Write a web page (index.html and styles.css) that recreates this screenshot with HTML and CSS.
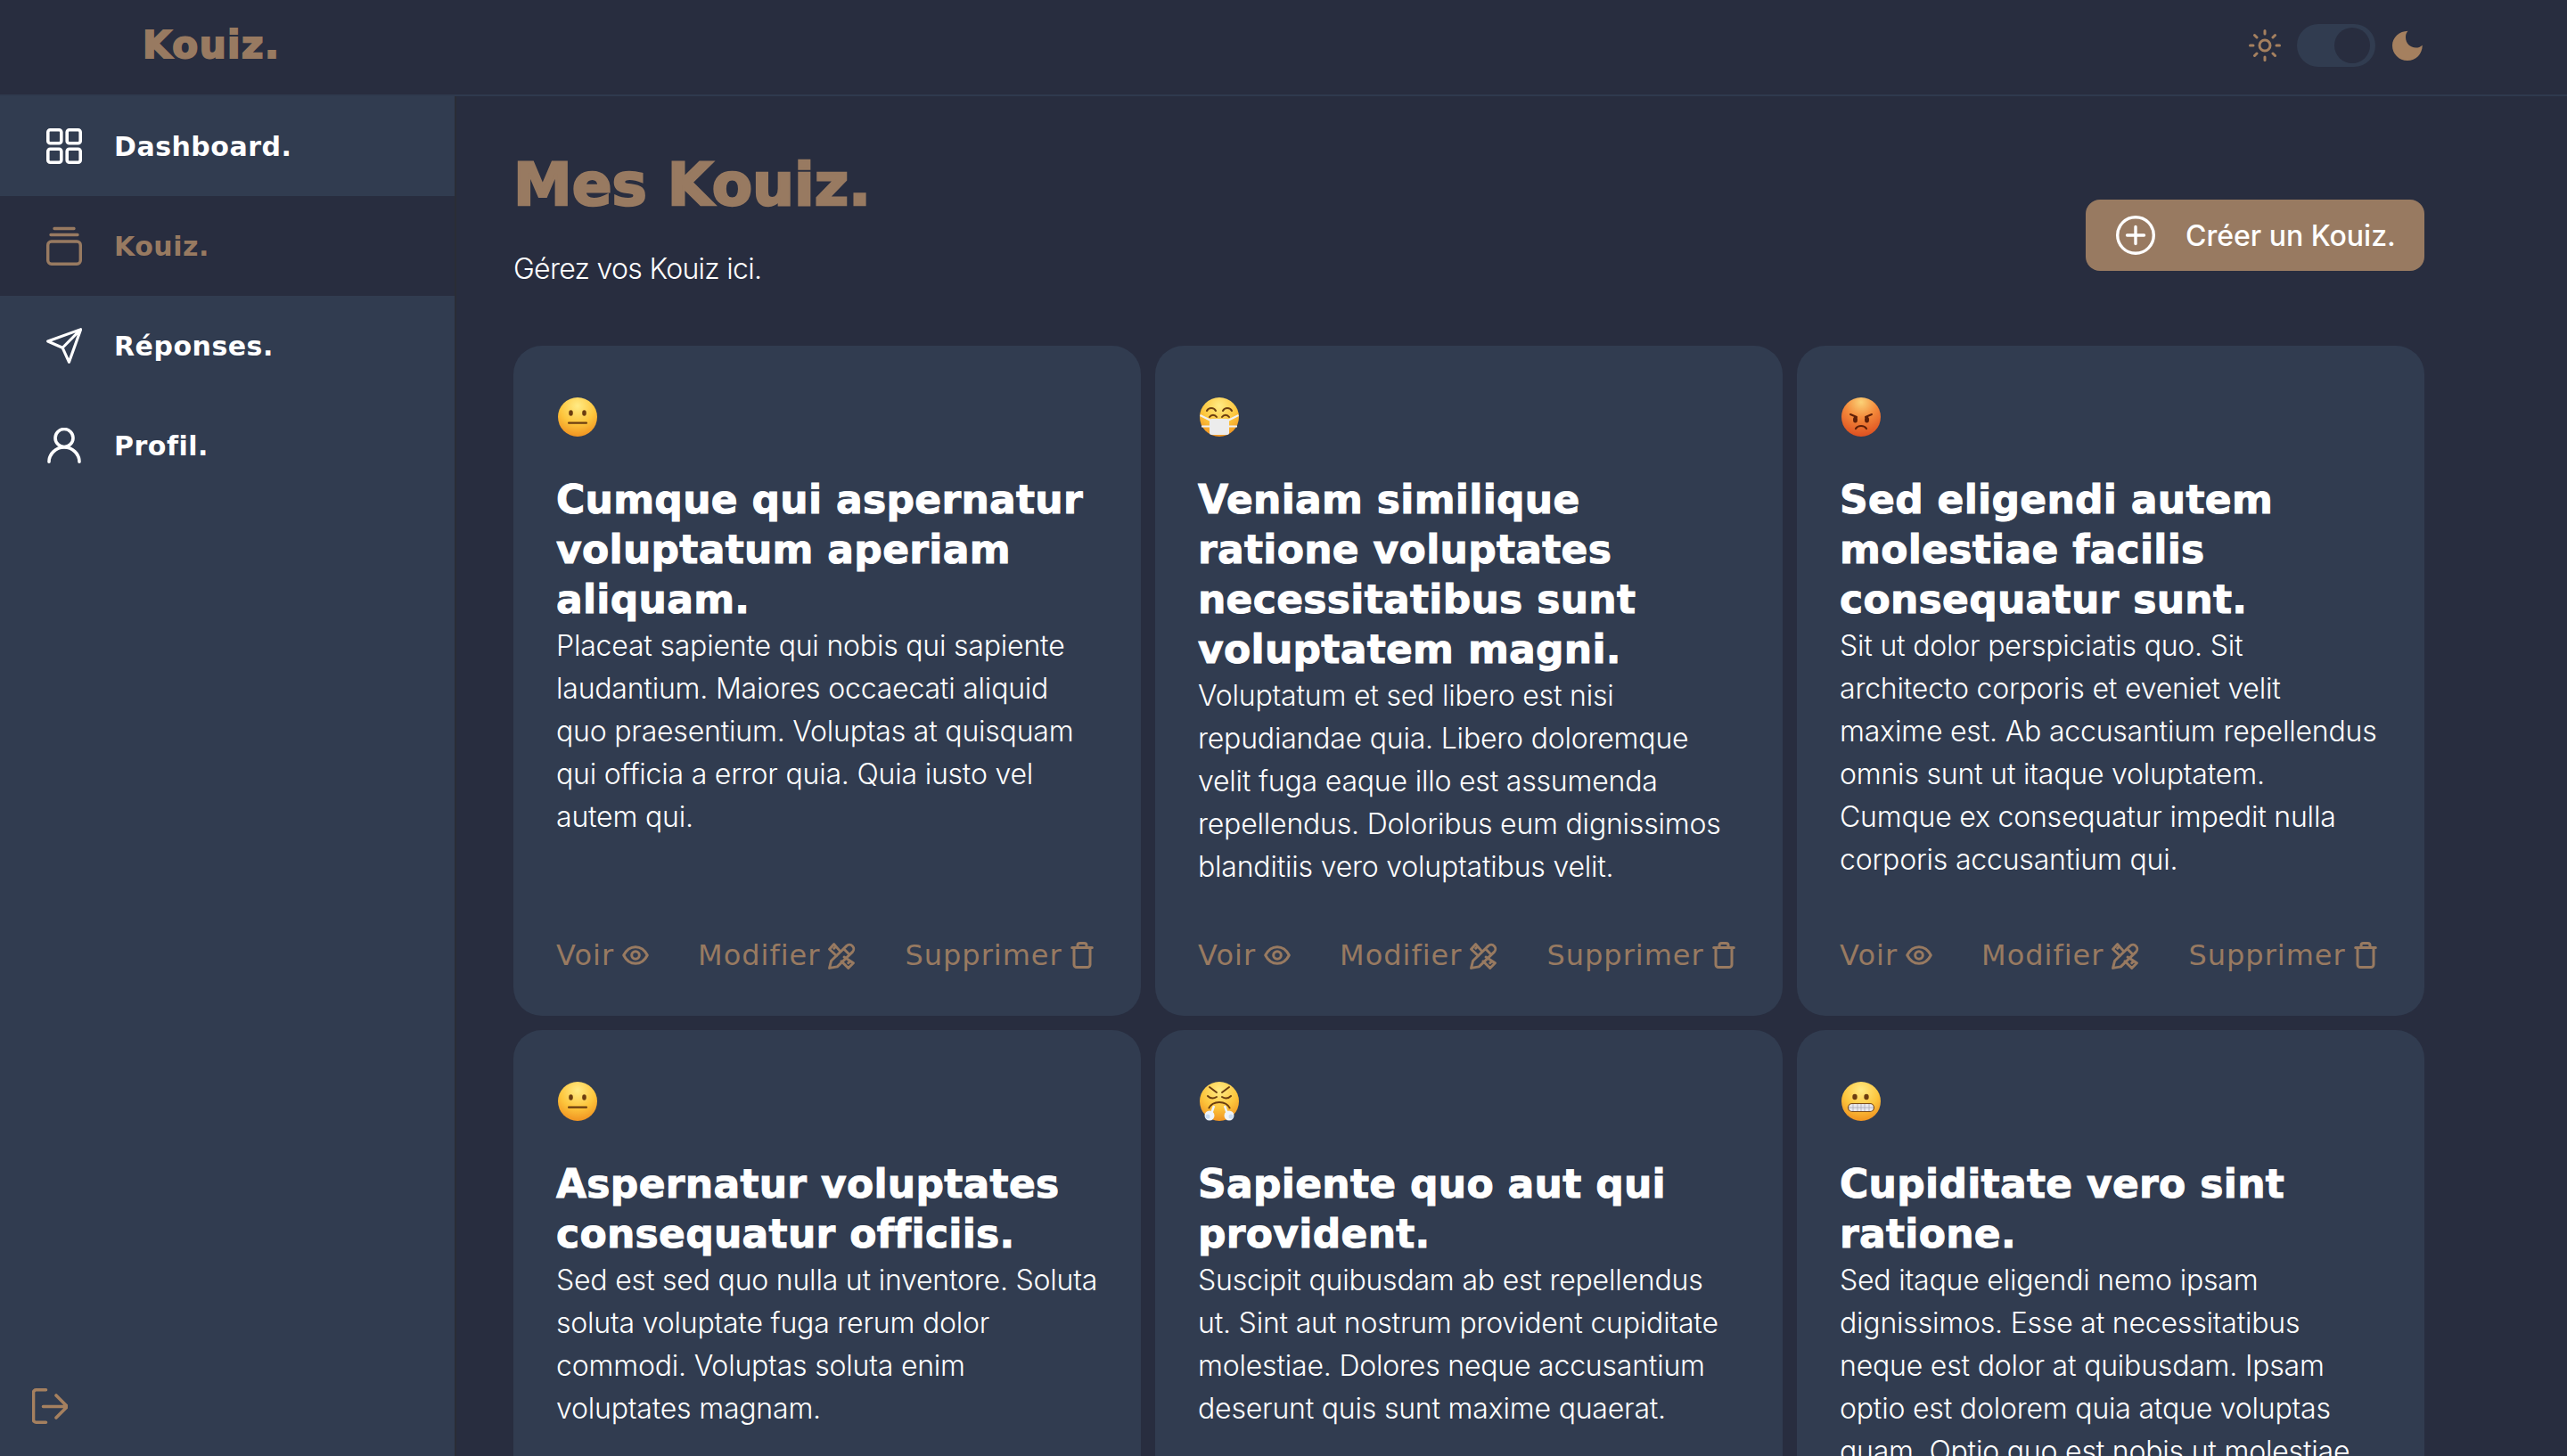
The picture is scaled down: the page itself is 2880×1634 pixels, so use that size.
FILE: index.html
```html
<!DOCTYPE html>
<html lang="fr">
<head>
<meta charset="utf-8">
<title>Kouiz.</title>
<link rel="stylesheet" href="styles.css">
</head>
<body>
<header class="topbar">
  <div class="logo">Kouiz.</div>
  <div class="theme">
    <svg class="sun" viewBox="0 0 36 36" fill="none" stroke="currentColor" stroke-width="3" stroke-linecap="round"><circle cx="18" cy="18" r="6"/><path d="M18 1.500v3.500M18 31v3.500M1.500 18H5M31 18h3.500M6.500 6.500L9 9M27 27l2.500 2.500M6.500 29.500L9 27M27 9l2.500-2.500"/></svg>
    <div class="track"><div class="knob"></div></div>
    <svg class="moon" viewBox="0 0 34 34"><path fill="currentColor" d="M17.500 0.800C15.500 3 15 5 15 8c0 6.500 5 11.500 11.500 11.500 2.800 0 4.800-.8 7.300-2.800C33.500 27 26.500 34 17 34 7.500 34 0 26.500 0 17 0 8 8 1 17.500 0.800z"/></svg>
  </div>
</header>
<div class="layout">
  <aside class="sidebar">
    <nav class="nav">
      <a class="nav-item">
        <svg class="nav-icon" viewBox="0 0 40 40" fill="none" stroke="currentColor" stroke-width="3.600"><rect x="1.800" y="1.800" width="15" height="15" rx="2.500"/><rect x="23.200" y="1.800" width="15" height="15" rx="2.500"/><rect x="1.800" y="23.200" width="15" height="15" rx="2.500"/><rect x="23.200" y="23.200" width="15" height="15" rx="2.500"/></svg>
        <span>Dashboard.</span>
      </a>
      <a class="nav-item active">
        <svg class="nav-icon tall" viewBox="0 0 40 44" fill="none" stroke="currentColor" stroke-width="3.400" stroke-linecap="round"><rect x="1.700" y="17" width="36.600" height="25.300" rx="4"/><path d="M5 9.500h30M9 2.500h22"/></svg>
        <span>Kouiz.</span>
      </a>
      <a class="nav-item">
        <svg class="nav-icon tall" viewBox="0 0 44 44" fill="none" stroke="currentColor" stroke-width="3.400" stroke-linejoin="round" stroke-linecap="round"><path d="M42.500 1.800L1.800 16.500 20 24.500l8 17.700zM20 24.500L42.500 1.800"/></svg>
        <span>Réponses.</span>
      </a>
      <a class="nav-item">
        <svg class="nav-icon" viewBox="0 0 40 40" fill="none" stroke="currentColor" stroke-width="3.600" stroke-linecap="round"><circle cx="20" cy="11.500" r="10"/><path d="M3 38.200C3 29.500 10.500 22 20 22s17 7.500 17 16.200"/></svg>
        <span>Profil.</span>
      </a>
    </nav>
    <svg class="logout" viewBox="0 0 40 40" fill="none" stroke="currentColor" stroke-width="3.600" stroke-linecap="round" stroke-linejoin="round"><path d="M15.500 1.800H4.500a3 3 0 0 0-3 3v30.400a3 3 0 0 0 3 3h11M12.500 20.500h27M27 8l12.500 12.500L27 33"/></svg>
  </aside>
  <main class="main">
    <div class="page-head">
      <div>
        <h1 class="page-title">Mes Kouiz.</h1>
        <p class="page-sub">Gérez vos Kouiz ici.</p>
      </div>
      <button class="create">
        <svg class="create-icon" viewBox="0 0 44 44" fill="none" stroke="currentColor" stroke-width="3.400" stroke-linecap="round"><circle cx="22" cy="22" r="20.300"/><path d="M22 12.500v19M12.500 22h19"/></svg>
        <span>Créer un Kouiz.</span>
      </button>
    </div>
    <section class="grid">

      <article class="card">
        <svg class="emoji" viewBox="0 0 44 44">
          <defs>
            <radialGradient id="yel" cx="50%" cy="22%" r="82%"><stop offset="0" stop-color="#ffeb85"/><stop offset=".55" stop-color="#fdc53c"/><stop offset="1" stop-color="#ee8d1e"/></radialGradient>
            <radialGradient id="red" cx="50%" cy="12%" r="90%"><stop offset="0" stop-color="#fbd277"/><stop offset=".45" stop-color="#f48a3b"/><stop offset="1" stop-color="#dc4d1f"/></radialGradient>
          </defs>
          <circle cx="22" cy="22" r="22" fill="url(#yel)"/><ellipse cx="14.500" cy="17.500" rx="2.300" ry="3.300" fill="#6b3d10"/><ellipse cx="29.500" cy="17.500" rx="2.300" ry="3.300" fill="#6b3d10"/><rect x="11" y="27.500" width="22" height="2.200" rx="1" fill="#6b3d10"/>
        </svg>
        <h2 class="card-title">Cumque qui aspernatur<br>voluptatum aperiam<br>aliquam.</h2>
        <p class="card-text">Placeat sapiente qui nobis qui sapiente<br>laudantium. Maiores occaecati aliquid<br>quo praesentium. Voluptas at quisquam<br>qui officia a error quia. Quia iusto vel<br>autem qui.</p>
        <div class="actions">
          <a class="action">Voir <svg class="ai-eye" viewBox="0 0 30 22" fill="none" stroke="currentColor" stroke-width="3" stroke-linejoin="round"><path d="M1.700 11C5 4.500 10 1.700 15 1.700S25 4.500 28.300 11C25 17.500 20 20.300 15 20.300S5 17.500 1.700 11z"/><circle cx="15" cy="11" r="4.300"/></svg></a>
          <a class="action">Modifier <svg class="ai-edit" viewBox="0 0 30 30" fill="none" stroke="currentColor" stroke-width="2.800" stroke-linejoin="round" stroke-linecap="round"><path d="M1.500 28.500l2-8L20 4.500a4.500 4.500 0 0 1 6.500 6.500L10 27zM17 7.500l6 6"/><path d="M13 10L6.500 2.500 1.500 8l7.500 7M17.500 16.500L27.500 23l-5.500 5.500-7.500-7.500M6.500 7l2-2M22 23l2-2"/></svg></a>
          <a class="action">Supprimer <svg class="ai-trash" viewBox="0 0 26 30" fill="none" stroke="currentColor" stroke-width="3" stroke-linecap="round" stroke-linejoin="round"><path d="M1.700 6.500h22.600M4 6.500v19a3 3 0 0 0 3 3h12a3 3 0 0 0 3-3v-19M8 6.500V4a2.500 2.500 0 0 1 2.500-2.500h5A2.500 2.500 0 0 1 18 4v2.500"/></svg></a>
        </div>
      </article>

      <article class="card">
        <svg class="emoji" viewBox="0 0 44 44">
          <circle cx="22" cy="22" r="22" fill="url(#yel)"/><path d="M8 15c2-4 8-4 10 0M26 15c2-4 8-4 10 0" fill="none" stroke="#6b3d10" stroke-width="2" stroke-linecap="round"/><path d="M11 22c2-3 6-3 8 0M25 22c2-3 6-3 8 0" fill="none" stroke="#6b3d10" stroke-width="2" stroke-linecap="round"/><path d="M0.500 20l12 6M43.500 20l-12 6M2 32.500h10M42 32.500H32" stroke="#f1f1f1" stroke-width="2"/><rect x="11" y="24" width="22" height="18" rx="2.500" fill="#ececec"/>
        </svg>
        <h2 class="card-title">Veniam similique<br>ratione voluptates<br>necessitatibus sunt<br>voluptatem magni.</h2>
        <p class="card-text">Voluptatum et sed libero est nisi<br>repudiandae quia. Libero doloremque<br>velit fuga eaque illo est assumenda<br>repellendus. Doloribus eum dignissimos<br>blanditiis vero voluptatibus velit.</p>
        <div class="actions">
          <a class="action">Voir <svg class="ai-eye" viewBox="0 0 30 22" fill="none" stroke="currentColor" stroke-width="3" stroke-linejoin="round"><path d="M1.700 11C5 4.500 10 1.700 15 1.700S25 4.500 28.300 11C25 17.500 20 20.300 15 20.300S5 17.500 1.700 11z"/><circle cx="15" cy="11" r="4.300"/></svg></a>
          <a class="action">Modifier <svg class="ai-edit" viewBox="0 0 30 30" fill="none" stroke="currentColor" stroke-width="2.800" stroke-linejoin="round" stroke-linecap="round"><path d="M1.500 28.500l2-8L20 4.500a4.500 4.500 0 0 1 6.500 6.500L10 27zM17 7.500l6 6"/><path d="M13 10L6.500 2.500 1.500 8l7.500 7M17.500 16.500L27.500 23l-5.500 5.500-7.500-7.500M6.500 7l2-2M22 23l2-2"/></svg></a>
          <a class="action">Supprimer <svg class="ai-trash" viewBox="0 0 26 30" fill="none" stroke="currentColor" stroke-width="3" stroke-linecap="round" stroke-linejoin="round"><path d="M1.700 6.500h22.600M4 6.500v19a3 3 0 0 0 3 3h12a3 3 0 0 0 3-3v-19M8 6.500V4a2.500 2.500 0 0 1 2.500-2.500h5A2.500 2.500 0 0 1 18 4v2.500"/></svg></a>
        </div>
      </article>

      <article class="card">
        <svg class="emoji" viewBox="0 0 44 44">
          <circle cx="22" cy="22" r="22" fill="url(#red)"/><path d="M10 19l7 3M34 19l-7 3" stroke="#5d1f08" stroke-width="2" stroke-linecap="round"/><ellipse cx="15.500" cy="25" rx="2.500" ry="3.500" fill="#5d1f08"/><ellipse cx="28.500" cy="25" rx="2.500" ry="3.500" fill="#5d1f08"/><path d="M16 35c2.500-4 9.500-4 12 0" fill="none" stroke="#5d1f08" stroke-width="2.200" stroke-linecap="round"/>
        </svg>
        <h2 class="card-title">Sed eligendi autem<br>molestiae facilis<br>consequatur sunt.</h2>
        <p class="card-text">Sit ut dolor perspiciatis quo. Sit<br>architecto corporis et eveniet velit<br>maxime est. Ab accusantium repellendus<br>omnis sunt ut itaque voluptatem.<br>Cumque ex consequatur impedit nulla<br>corporis accusantium qui.</p>
        <div class="actions">
          <a class="action">Voir <svg class="ai-eye" viewBox="0 0 30 22" fill="none" stroke="currentColor" stroke-width="3" stroke-linejoin="round"><path d="M1.700 11C5 4.500 10 1.700 15 1.700S25 4.500 28.300 11C25 17.500 20 20.300 15 20.300S5 17.500 1.700 11z"/><circle cx="15" cy="11" r="4.300"/></svg></a>
          <a class="action">Modifier <svg class="ai-edit" viewBox="0 0 30 30" fill="none" stroke="currentColor" stroke-width="2.800" stroke-linejoin="round" stroke-linecap="round"><path d="M1.500 28.500l2-8L20 4.500a4.500 4.500 0 0 1 6.500 6.500L10 27zM17 7.500l6 6"/><path d="M13 10L6.500 2.500 1.500 8l7.500 7M17.500 16.500L27.500 23l-5.500 5.500-7.500-7.500M6.500 7l2-2M22 23l2-2"/></svg></a>
          <a class="action">Supprimer <svg class="ai-trash" viewBox="0 0 26 30" fill="none" stroke="currentColor" stroke-width="3" stroke-linecap="round" stroke-linejoin="round"><path d="M1.700 6.500h22.600M4 6.500v19a3 3 0 0 0 3 3h12a3 3 0 0 0 3-3v-19M8 6.500V4a2.500 2.500 0 0 1 2.500-2.500h5A2.500 2.500 0 0 1 18 4v2.500"/></svg></a>
        </div>
      </article>

      <article class="card">
        <svg class="emoji" viewBox="0 0 44 44">
          <circle cx="22" cy="22" r="22" fill="url(#yel)"/><ellipse cx="14.500" cy="17.500" rx="2.300" ry="3.300" fill="#6b3d10"/><ellipse cx="29.500" cy="17.500" rx="2.300" ry="3.300" fill="#6b3d10"/><rect x="11" y="27.500" width="22" height="2.200" rx="1" fill="#6b3d10"/>
        </svg>
        <h2 class="card-title">Aspernatur voluptates<br>consequatur officiis.</h2>
        <p class="card-text">Sed est sed quo nulla ut inventore. Soluta<br>soluta voluptate fuga rerum dolor<br>commodi. Voluptas soluta enim<br>voluptates magnam.</p>
      </article>

      <article class="card">
        <svg class="emoji" viewBox="0 0 44 44">
          <circle cx="22" cy="22" r="22" fill="url(#yel)"/><path d="M11 6l8 6M33 6l-8 6" stroke="#6b3d10" stroke-width="2" stroke-linecap="round"/><path d="M9 16c3 3 7 3 10 1M35 16c-3 3-7 3-10 1" fill="none" stroke="#6b3d10" stroke-width="2" stroke-linecap="round"/><path d="M10 30c3-6 7-7 12-7s9 1 12 7" fill="none" stroke="#6b3d10" stroke-width="2"/><path d="M16 27l-3 9M28 27l3 9" stroke="#eef4fb" stroke-width="2.500"/><circle cx="11" cy="38" r="5.500" fill="#eef4fb"/><circle cx="33" cy="38" r="5.500" fill="#eef4fb"/><circle cx="9" cy="39" r="2.500" fill="#c9dcf2"/><circle cx="35" cy="39" r="2.500" fill="#c9dcf2"/>
        </svg>
        <h2 class="card-title">Sapiente quo aut qui<br>provident.</h2>
        <p class="card-text">Suscipit quibusdam ab est repellendus<br>ut. Sint aut nostrum provident cupiditate<br>molestiae. Dolores neque accusantium<br>deserunt quis sunt maxime quaerat.</p>
      </article>

      <article class="card">
        <svg class="emoji" viewBox="0 0 44 44">
          <circle cx="22" cy="22" r="22" fill="url(#yel)"/><ellipse cx="15" cy="17" rx="2.700" ry="3.200" fill="#6b3d10"/><ellipse cx="28" cy="17" rx="2.700" ry="3.200" fill="#6b3d10"/><rect x="7.500" y="24.500" width="29" height="9" rx="4.500" fill="#e8e8ee" stroke="#7a4a18" stroke-width="1.200"/><path d="M8 29h28M13 25v8M18 25v8M22 25v8M26 25v8M31 25v8" stroke="#a9a9b5" stroke-width=".8"/>
        </svg>
        <h2 class="card-title">Cupiditate vero sint<br>ratione.</h2>
        <p class="card-text">Sed itaque eligendi nemo ipsam<br>dignissimos. Esse at necessitatibus<br>neque est dolor at quibusdam. Ipsam<br>optio est dolorem quia atque voluptas<br>quam. Optio quo est nobis ut molestiae</p>
      </article>

    </section>
  </main>
</div>
</body>
</html>
```
FILE: styles.css
```css
* { box-sizing: border-box; }
html, body { margin: 0; height: 100%; overflow: hidden; }
body {
  background: #282d3f;
  color: #fff;
  font-family: "Inter", "Liberation Sans", sans-serif;
  display: flex;
  flex-direction: column;
}
.topbar {
  flex: 0 0 108px;
  border-bottom: 2px solid #2f3a4e;
  background: #282d3f;
  display: flex;
  justify-content: space-between;
  align-items: center;
  padding: 0 162px 0 160px;
}
.logo, .page-title {
  font-family: "DejaVu Sans", sans-serif;
  font-weight: 700;
  color: #987a61;
}
.logo { font-size: 42px; letter-spacing: 1.500px; line-height: 1; margin-top: -4px; -webkit-text-stroke: 2px #987a61; }
.theme { display: flex; align-items: center; color: #a5805f; margin-bottom: 4px; }
.sun { width: 36px; height: 36px; margin-right: 18px; }
.track {
  width: 88px; height: 48px; border-radius: 24px;
  background: #313c50;
  display: flex; align-items: center; justify-content: flex-end;
  padding-right: 6px;
}
.knob { width: 40px; height: 40px; border-radius: 50%; background: #282d3f; }
.moon { width: 34px; height: 34px; margin-left: 19px; }

.layout { flex: 1; display: flex; min-height: 0; }
.sidebar {
  flex: 0 0 512px;
  background: #313c50;
  border-right: 2px solid #2a2d36;
  display: flex;
  flex-direction: column;
  justify-content: space-between;
  padding-bottom: 36px;
}
.nav { display: flex; flex-direction: column; }
.nav-item {
  height: 112px;
  display: flex;
  align-items: center;
  padding-left: 52px;
  gap: 36px;
  font-family: "DejaVu Sans", sans-serif;
  font-weight: 700;
  font-size: 30px;
  letter-spacing: .5px;
  color: #fff;
}
.nav-item.active { background: #282d3f; color: #987a61; }
.nav-icon { width: 40px; height: 40px; flex: none; }
.nav-icon.tall { height: 44px; }
.logout { width: 40px; height: 40px; margin-left: 36px; color: #a5805f; }

.main { flex: 1; min-width: 0; padding: 50px 160px 0 64px; overflow: hidden; }
.page-head { display: flex; justify-content: space-between; align-items: flex-start; }
.page-title {
  margin: 0;
  font-size: 66px;
  line-height: 100px;
  letter-spacing: 0;
  -webkit-text-stroke: 2.500px #987a61;
}
.page-sub { margin: 20px 0 0; font-size: 32px; line-height: 48px; font-weight: 300; letter-spacing: -.7px; }
.create {
  margin-top: 66px;
  width: 380px; height: 80px;
  border: 0; border-radius: 16px;
  background: #987a61;
  color: #fff;
  display: flex; align-items: center;
  padding: 0 0 0 34px;
  gap: 34px;
  font: 500 32px "Inter", sans-serif;
  letter-spacing: 0;
}
.create-icon { width: 44px; height: 44px; flex: none; }

.grid {
  display: grid;
  grid-template-columns: repeat(3, 704px);
  gap: 16px;
  margin-top: 62px;
}
.card {
  background: #313c50;
  border-radius: 32px;
  padding: 58px 48px 48px;
  display: flex;
  flex-direction: column;
}
.emoji { width: 44px; height: 44px; flex: none; margin: 0 0 43px 2px; }
.card-title {
  margin: 0;
  font-family: "DejaVu Sans", sans-serif;
  font-weight: 700;
  font-size: 44px;
  line-height: 56px;
  letter-spacing: .3px;
  white-space: nowrap;
  -webkit-text-stroke: 1px #fff;
}
.card-text {
  margin: 0;
  font-size: 32px;
  line-height: 48px;
  font-weight: 300;
  letter-spacing: -.2px;
  white-space: nowrap;
}
.actions {
  margin-top: auto;
  padding-top: 55px;
  display: flex;
  gap: 55px;
}
.action {
  display: flex;
  align-items: center;
  gap: 9px;
  height: 40px;
  color: #987a61;
  font-family: "DejaVu Sans", sans-serif;
  font-size: 32px;
  letter-spacing: 1px;
  white-space: nowrap;
}
.ai-eye { width: 30px; height: 22px; flex: none; }
.ai-edit { width: 31px; height: 31px; flex: none; }
.ai-trash { width: 26px; height: 30px; flex: none; }
```
